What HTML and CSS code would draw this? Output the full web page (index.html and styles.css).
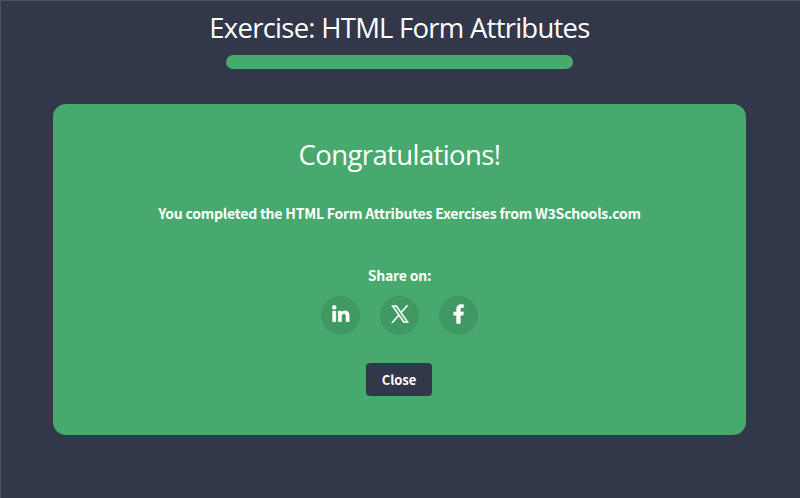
FILE: index.html
```html
<!DOCTYPE html>
<html lang="en">
<head>
<meta charset="utf-8">
<title>Exercise: HTML Form Attributes</title>
<link rel="stylesheet" href="styles.css">
</head>
<body>
<main class="page">
  <h1 class="title"><span>Exercise: HTML Form Attributes</span></h1>
  <div class="progress"></div>
  <section class="card">
    <h2 class="congrats"><span>Congratulations!</span></h2>
    <p class="message"><span>You completed the HTML Form Attributes Exercises from W3Schools.com</span></p>
    <p class="share-label"><span>Share on:</span></p>
    <div class="share">
      <a class="share-link" aria-label="LinkedIn">
        <svg width="18" height="18" viewBox="0 0 18 18" fill="#fff" stroke="#fff" stroke-width=".3"><circle cx="2.2" cy="2.4" r="2.1"/><path d="M.5 6.1h3.4v10.7H.5zM6.2 6.1h3.2v1.5c.6-1 1.8-1.8 3.4-1.8 3.5 0 4.5 2.1 4.5 5.1v5.9h-3.4v-5.2c0-1.4-.1-2.9-1.9-2.9s-2.4 1.4-2.4 2.8v5.3H6.2z"/></svg>
      </a>
      <a class="share-link" aria-label="X">
        <svg width="18" height="18" viewBox="0 0 24 24" fill="#fff" stroke="#fff" stroke-width=".7"><path d="M14.3 10.2 22.8 .5h-2L13.4 8.9 7.5 .5H.7l8.9 12.7L.7 23.5h2l7.8-9 6.2 9h6.8zM11.5 13.4l-.9-1.3L3.4 2h3.1l5.8 8.1.9 1.3 7.5 10.7h-3.1z"/></svg>
      </a>
      <a class="share-link" aria-label="Facebook">
        <svg width="12" height="20" viewBox="0 0 12 20" fill="#fff" stroke="#fff" stroke-width=".5"><path d="M3.6 19.4v-8.1H.7V7.9h2.9V5.2C3.6 2.3 5.3.5 8.1.5c1.3 0 2.6.2 2.6.2v2.8H9.2c-1.4 0-1.9.9-1.9 1.8v2.6h3.2l-.5 3.4H7.3v8.1z"/></svg>
      </a>
    </div>
    <button class="close"><span>Close</span></button>
  </section>
</main>
</body>
</html>
```
FILE: styles.css
```css
* {
  box-sizing: border-box;
}

body {
  margin: 0;
  background: #32384a;
  color: #fff;
  font-family: "Noto Sans CJK SC", "Open Sans", sans-serif;
}

.page {
  display: flex;
  flex-direction: column;
  align-items: center;
  height: 498px;
  padding-right: 2px;
  border-top: 1px solid #4b5265;
  border-left: 1px solid #4b5265;
}

.title,
.congrats {
  margin: 0;
  font-family: "Open Sans", "Noto Sans", sans-serif;
  font-weight: 400;
  font-size: 27.5px;
  line-height: 40px;
  letter-spacing: -0.75px;
  white-space: nowrap;
}

.title {
  margin-top: 7px;
}

.progress {
  width: 347px;
  height: 14px;
  margin-top: 7px;
  border-radius: 7px;
  background: #47a96d;
}

.card {
  display: flex;
  flex-direction: column;
  align-items: center;
  width: 693px;
  height: 331px;
  margin-top: 35px;
  padding-top: 31px;
  border-radius: 13px;
  background: #47a96d;
}

.congrats {
  letter-spacing: -0.6px;
}

.message,
.share-label {
  margin: 0;
  font-size: 14px;
  font-weight: 700;
  line-height: 22px;
  letter-spacing: -0.21px;
  white-space: nowrap;
}

.message {
  margin-top: 27px;
}

.share-label {
  margin-top: 40px;
}

.share {
  display: flex;
  gap: 20px;
  margin-top: 10px;
}

.share-link {
  display: flex;
  align-items: center;
  justify-content: center;
  width: 39px;
  height: 39px;
  padding-bottom: 3px;
  border-radius: 50%;
  background: #409862;
}

.close {
  width: 66px;
  height: 33px;
  margin-top: 28px;
  margin-right: 1px;
  padding: 0;
  border: 0;
  border-radius: 4px;
  background: #32384a;
  color: #fff;
  font: 700 13px/33px "Noto Sans CJK SC", "Open Sans", sans-serif;
}
```
